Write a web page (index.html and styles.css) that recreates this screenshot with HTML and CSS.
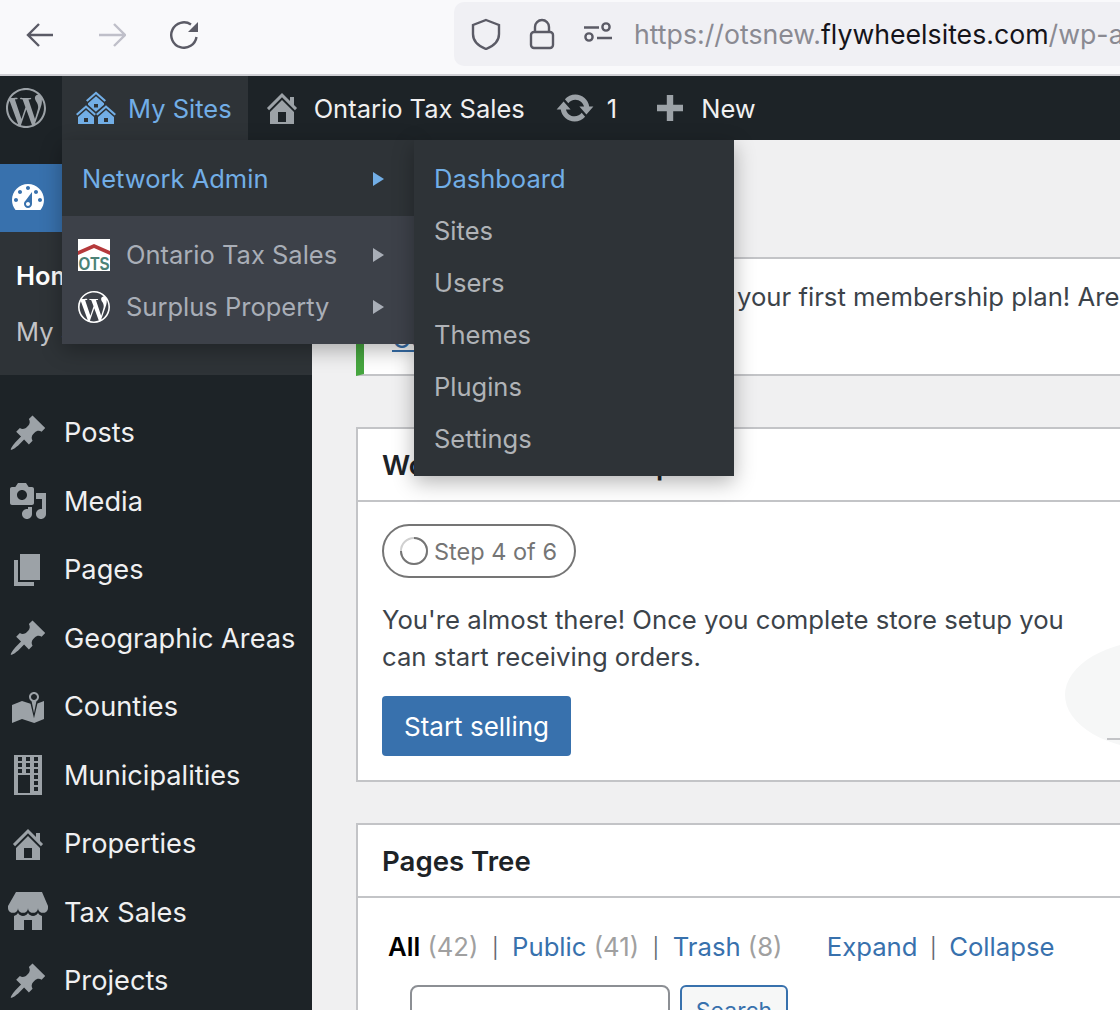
FILE: index.html
```html
<!DOCTYPE html>
<html lang="en">
<head>
<meta charset="utf-8">
<title>Dashboard</title>
<link rel="stylesheet" href="styles.css">
</head>
<body>
<svg class="defs" aria-hidden="true">
  <symbol id="i-wp" viewBox="0 0 24 24"><path d="M21.469 6.825c.84 1.537 1.318 3.3 1.318 5.175 0 3.979-2.156 7.456-5.363 9.325l3.295-9.527c.615-1.54.82-2.771.82-3.864 0-.405-.026-.78-.07-1.11m-7.981.105c.647-.03 1.232-.105 1.232-.105.582-.075.514-.93-.067-.899 0 0-1.755.135-2.88.135-1.064 0-2.85-.15-2.85-.15-.585-.03-.661.855-.075.885 0 0 .54.061 1.125.09l1.68 4.605-2.37 7.08L5.354 6.9c.649-.03 1.234-.1 1.234-.1.585-.075.516-.93-.065-.896 0 0-1.746.138-2.874.138-.2 0-.438-.008-.69-.015C4.911 3.15 8.235 1.215 12 1.215c2.809 0 5.365 1.072 7.286 2.833-.046-.003-.091-.009-.141-.009-1.06 0-1.812.923-1.812 1.914 0 .89.513 1.643 1.06 2.531.411.72.89 1.643.89 2.977 0 .915-.354 1.994-.821 3.479l-1.075 3.585-3.9-11.61.001.014zM12 22.784c-1.059 0-2.081-.153-3.048-.437l3.237-9.406 3.315 9.087c.024.053.05.101.078.149-1.12.393-2.325.609-3.582.609M1.211 12c0-1.564.336-3.05.935-4.39L7.29 21.709C3.694 19.96 1.212 16.271 1.211 12M12 0C5.385 0 0 5.385 0 12s5.385 12 12 12 12-5.385 12-12S18.615 0 12 0"/></symbol>
  <symbol id="i-pin" viewBox="0 0 20 20"><path d="M10.44 3.02l1.82-1.82 6.36 6.35-1.83 1.82c-1.05-.68-2.48-.57-3.41.36l-.75.75c-.92.93-1.04 2.35-.35 3.41l-1.83 1.82-2.41-2.41-2.8 2.79c-.42.42-3.38 2.71-3.8 2.29s1.86-3.39 2.28-3.81l2.79-2.79L4.1 9.36l1.83-1.82c1.05.69 2.48.57 3.41-.36l.75-.75c.93-.92 1.04-2.35.35-3.41z"/></symbol>
  <symbol id="i-home" viewBox="0 0 20 20"><path d="M16 8.5l1.53 1.53-1.06 1.06L10 4.62l-6.47 6.47-1.06-1.06L10 2.5l4 4v-2h2v4zm-6-2.46l6 5.99V18H4v-5.97zM12 17v-5H8v5h4z"/></symbol>
</svg>

<div class="browser">
  <div class="nav-btns">
    <svg class="nav-ic" viewBox="0 0 28 28"><path d="M27 14H2M13 3L2 14l11 11"/></svg>
    <svg class="nav-ic off" viewBox="0 0 28 28"><path d="M1 14h26M16 3l11 11-11 11"/></svg>
    <svg class="nav-ic" viewBox="0 0 28 28"><path d="M26.5 16A12.7 12.7 0 1 1 21 3.5"/><path class="solid" d="M28 1v10H18z"/></svg>
  </div>
  <div class="urlbar">
    <svg class="url-ic" viewBox="0 0 32 32"><path d="M16 2l13 5v9c0 7-5 12-13 15C8 28 3 23 3 16V7z"/></svg>
    <svg class="url-ic" viewBox="0 0 32 32"><rect x="5" y="14" width="22" height="16" rx="3"/><path d="M9 14V9a7 7 0 0 1 14 0v5"/></svg>
    <svg class="url-ic" viewBox="0 0 32 32"><path d="M2 9.500h15M15 20h15"/><circle cx="24" cy="9" r="3.600"/><circle cx="7" cy="19" r="3.600"/></svg>
    <span class="url">https://otsnew.<b class="host">flywheelsites.com</b>/wp-admin/network/</span>
  </div>
</div>

<header class="adminbar">
  <div class="ab-logo"><svg class="ic40"><use href="#i-wp"/></svg></div>
  <div class="ab-item hover">
    <svg class="ic40" viewBox="0 0 20 20"><path d="M14.27 6.87L10 3.14 5.73 6.87 5 6.14l5-4.38 5 4.38zM14 8.42l-4.05 3.43L6 8.38v-.74l4-3.5 4 3.5v.78zM11 9.7V8H9v1.7h2zm-1.73 4.03L5 10 .73 13.73 0 13l5-4.38L10 13zm10 0L15 10l-4.27 3.73L10 13l5-4.38L20 13zM5 11l4 3.5V18H1v-3.5zm10 0l4 3.5V18h-8v-3.5zm-9 6v-2H4v2h2zm10 0v-2h-2v2h2z"/></svg>
    <span>My Sites</span>
  </div>
  <div class="ab-item"><svg class="ic40"><use href="#i-home"/></svg><span>Ontario Tax Sales</span></div>
  <div class="ab-item"><svg class="ic40" viewBox="0 0 20 20"><path d="M10.2 3.28c3.53 0 6.43 2.61 6.92 6h2.08l-3.5 4-3.5-4h2.32c-.45-1.97-2.21-3.45-4.32-3.45-1.45 0-2.73.71-3.54 1.78L4.95 5.66C6.23 4.2 8.11 3.28 10.2 3.28zm-.4 13.44c-3.52 0-6.43-2.61-6.92-6H.8l3.5-4c1.17 1.33 2.33 2.67 3.5 4H5.48c.45 1.97 2.21 3.45 4.32 3.45 1.45 0 2.73-.71 3.54-1.78l1.71 1.95c-1.28 1.46-3.15 2.38-5.25 2.38z"/></svg><span>1</span></div>
  <div class="ab-item ab-new"><svg class="ic40" viewBox="0 0 20 20"><path d="M16.500 8.400v3.200h-4.900v4.900H8.400v-4.900H3.500V8.400h4.900V3.500h3.200v4.900z"/></svg><span>New</span></div>

  <div class="dropdown">
    <div class="dd-top">
      <div class="dd-row active"><span>Network Admin</span><i class="arrow"></i></div>
    </div>
    <div class="dd-bottom">
      <div class="dd-site">
        <svg class="blavatar" viewBox="0 0 32 32"><rect width="32" height="32" fill="#fff"/><path d="M0 12L16 5l16 7v4L16 9 0 16z" fill="#b5393b"/><text class="ots" x="16" y="31" text-anchor="middle" textLength="31" lengthAdjust="spacingAndGlyphs">OTS</text></svg>
        <span>Ontario Tax Sales</span><i class="arrow"></i>
      </div>
      <div class="dd-site">
        <svg class="blavatar wp"><use href="#i-wp"/></svg>
        <span>Surplus Property</span><i class="arrow"></i>
      </div>
    </div>
    <ul class="flyout">
      <li class="active">Dashboard</li>
      <li>Sites</li>
      <li>Users</li>
      <li>Themes</li>
      <li>Plugins</li>
      <li>Settings</li>
    </ul>
  </div>
</header>

<div class="layout">
  <nav class="sidebar">
    <div class="side-current">
      <svg class="ic40" viewBox="0 0 20 20"><path d="M3.76 16h12.48c1.1-1.37 1.76-3.11 1.76-5 0-4.42-3.58-8-8-8s-8 3.58-8 8c0 1.89.66 3.63 1.76 5zM10 4c.55 0 1 .45 1 1s-.45 1-1 1-1-.45-1-1 .45-1 1-1zM6 6c.55 0 1 .45 1 1s-.45 1-1 1-1-.45-1-1 .45-1 1-1zm8 0c.55 0 1 .45 1 1s-.45 1-1 1-1-.45-1-1 .45-1 1-1zm-5.37 5.55L12 7v6c0 1.1-.9 2-2 2s-2-.9-2-2c0-.57.24-1.08.63-1.45zM4 10c.55 0 1 .45 1 1s-.45 1-1 1-1-.45-1-1 .45-1 1-1zm12 0c.55 0 1 .45 1 1s-.45 1-1 1-1-.45-1-1 .45-1 1-1zm-5 3c0-.55-.45-1-1-1s-1 .45-1 1 .45 1 1 1 1-.45 1-1z"/></svg>
      <span>Dashboard</span>
    </div>
    <div class="side-sub">
      <div class="sub-home">Home</div>
      <div class="sub-link">My Sites</div>
    </div>
    <ul class="side-menu">
      <li><svg class="ic40"><use href="#i-pin"/></svg>Posts</li>
      <li><svg class="ic40" viewBox="0 0 20 20"><path d="M13 11V4c0-.55-.45-1-1-1h-1.67L9 1H5L3.67 3H2c-.55 0-1 .45-1 1v7c0 .55.45 1 1 1h10c.55 0 1-.45 1-1zM7 4.5c1.38 0 2.5 1.12 2.5 2.5S8.38 9.5 7 9.5 4.5 8.38 4.5 7 5.62 4.5 7 4.5zM14 6h5v10.5c0 1.38-1.12 2.5-2.5 2.5S14 17.88 14 16.5s1.12-2.5 2.5-2.5c.17 0 .34.02.5.05V9h-3V6zm-4 8.05V13h2v3.5c0 1.38-1.12 2.5-2.5 2.5S7 17.88 7 16.5 8.12 14 9.5 14c.17 0 .34.02.5.05z"/></svg>Media</li>
      <li><svg class="ic40" viewBox="0 0 20 20"><path d="M6 15V2h10v13H6zm-1 1h8v2H3V5h2v11z"/></svg>Pages</li>
      <li><svg class="ic40"><use href="#i-pin"/></svg>Geographic Areas</li>
      <li><svg class="ic40" viewBox="0 0 20 20"><path d="M13 13.14l1.17-5.94c.79-.43 1.33-1.25 1.33-2.2 0-1.38-1.12-2.5-2.5-2.5S10.5 3.62 10.5 5c0 .95.54 1.77 1.33 2.2zm0-9.64c.83 0 1.5.67 1.5 1.5s-.67 1.5-1.5 1.5-1.5-.67-1.5-1.5.67-1.5 1.5-1.5zm1.72 4.8L18 6.97v9L13.12 18 7 15.97l-5 2v-9l5-2 4.27 1.41 1.73 7.3z"/></svg>Counties</li>
      <li><svg class="ic40" viewBox="0 0 20 20"><path fill-rule="evenodd" d="M3 0h14v20H3zM5 1v2h2V1zM9 1v2h2V1zM13 1v2h2V1zM5 4v2h2V4zM9 4v2h2V4zM13 4v2h2V4zM5 7v2h2V7zM9 7v2h2V7zM13 7v2h2V7zM5 10v9h6v-9zM13 13v2h2v-2zM13 16v2h2v-2zM13 10v2h2v-2z"/></svg>Municipalities</li>
      <li><svg class="ic40"><use href="#i-home"/></svg>Properties</li>
      <li><svg class="ic40" viewBox="0 0 20 20"><path d="M1 10c.41.29.96.43 1.5.43.55 0 1.09-.14 1.5-.43.62-.46 1-1.17 1-2 0 .83.37 1.54 1 2 .41.29.96.43 1.5.43.55 0 1.09-.14 1.5-.43.62-.46 1-1.17 1-2 0 .83.37 1.54 1 2 .41.29.96.43 1.51.43.54 0 1.08-.14 1.49-.43.62-.46 1-1.17 1-2 0 .83.37 1.54 1 2 .41.29.96.43 1.5.43.55 0 1.09-.14 1.5-.43.63-.46 1-1.17 1-2V7l-3-7H4L0 7v1c0 .83.37 1.54 1 2zm2 8.99h5v-5h4v5h5v-7c-.37-.05-.72-.22-1-.43-.63-.45-1-.73-1-1.56 0 .83-.38 1.11-1 1.56-.41.3-.95.43-1.49.44-.55 0-1.1-.14-1.51-.44-.63-.45-1-.73-1-1.56 0 .83-.38 1.11-1 1.56-.41.3-.95.43-1.5.44-.54 0-1.09-.14-1.5-.44-.63-.45-1-.73-1-1.57 0 .84-.38 1.12-1 1.57-.29.21-.63.38-1 .44v6.99z"/></svg>Tax Sales</li>
      <li><svg class="ic40"><use href="#i-pin"/></svg>Projects</li>
    </ul>
  </nav>

  <main class="content">
    <div class="notice">
      <p class="notice-text"><span class="notice-lead">Get started by creating</span><span>your first membership plan! Are you ready to begin?</span></p>
      <a class="notice-link" href="#">Get started</a>
    </div>

    <section class="card setup">
      <h2 class="card-head">WooCommerce Setup</h2>
      <div class="card-body setup-body">
        <div class="pill">
          <svg class="spinner" viewBox="0 0 28 28"><circle cx="14" cy="14" r="13" class="sp-track"/><path d="M14 1a13 13 0 0 1 0 26 13 13 0 0 1-13-13" class="sp-fill"/></svg>
          <span>Step 4 of 6</span>
        </div>
        <p class="setup-text">You're almost there! Once you complete store setup you can start receiving orders.</p>
        <a class="primary" href="#">Start selling</a>
        <div class="blob"></div>
        <div class="blob-line"></div>
      </div>
    </section>

    <section class="card tree">
      <h2 class="card-head">Pages Tree</h2>
      <div class="card-body tree-body">
        <div class="filters">
          <b class="f-all">All</b> <span class="count">(42)</span><span class="sep">|</span><a href="#">Public</a> <span class="count">(41)</span><span class="sep">|</span><a href="#">Trash</a> <span class="count">(8)</span>
          <a class="expand" href="#">Expand</a><span class="sep">|</span><a href="#">Collapse</a>
        </div>
        <div class="search">
          <input class="search-input" type="text" aria-label="Search">
          <button class="search-btn" type="button">Search</button>
        </div>
      </div>
    </section>
  </main>
</div>
</body>
</html>
```
FILE: styles.css
```css
* { box-sizing: border-box; }
html, body { margin: 0; height: 1010px; overflow: hidden; }
body {
  font-family: Inter, "Noto Sans", "Liberation Sans", sans-serif;
  font-size: 25.5px;
  background: #f0f0f1;
  color: #3c434a;
  display: flex;
  flex-direction: column;
}
.defs { position: absolute; width: 0; height: 0; }
ul { list-style: none; margin: 0; padding: 0; }
p { margin: 0; }
a { color: #3871ad; text-decoration: none; }
.ic40 { width: 40px; height: 40px; flex: none; fill: #9ca2a7; }

/* browser chrome */
.browser {
  height: 76px;
  flex: none;
  background: #f9f9fb;
  border-bottom: 2px solid #cfcfd4;
  display: flex;
  padding-top: 2px;
}
.nav-btns { width: 454px; display: flex; align-items: flex-start; gap: 44px; padding: 19px 0 0 26px; }
.nav-ic { width: 28px; height: 28px; fill: none; stroke: #5b5b66; stroke-width: 2.4; }
.nav-ic.off { stroke: #bfbfc9; }
.nav-ic .solid { fill: #5b5b66; stroke: none; }
.urlbar {
  flex: 1;
  height: 64px;
  background: #f0f0f4;
  border-radius: 10px 0 0 10px;
  display: flex;
  align-items: center;
  padding-left: 16px;
  gap: 24px;
  overflow: hidden;
  white-space: nowrap;
}
.url-ic { width: 32px; height: 32px; flex: none; fill: none; stroke: #5b5b66; stroke-width: 2.4; }
.url { margin-left: -4px; color: #8a8a92; font-size: 26.7px; }
.host { font-weight: 400; color: #15141a; }

/* admin bar */
.adminbar {
  position: relative;
  z-index: 5;
  flex: none;
  height: 64px;
  background: #1d2327;
  color: #f0f0f1;
  display: flex;
  align-items: stretch;
  white-space: nowrap;
}
.ab-logo { width: 62px; padding-left: 6px; display: flex; align-items: center; }
.ab-item { display: flex; align-items: center; gap: 12px; padding: 0 16px 0 14px; }
.ab-new { padding-left: 17px; gap: 11px; }
.ab-item.hover { background: #2e3337; color: #72aee6; }
.ab-item.hover .ic40 { fill: #72aee6; }

.dropdown {
  position: absolute;
  left: 62px;
  top: 64px;
  width: 352px;
  box-shadow: 0 6px 20px rgba(0, 0, 0, .3);
  color: #c3c4c7;
}
.dd-top { height: 76px; background: #2e3337; padding-top: 13px; }
.dd-row { height: 52px; display: flex; align-items: center; padding: 0 30px 0 20px; justify-content: space-between; }
.dd-row span { padding-bottom: 2px; }
.dd-row.active { color: #72aee6; }
.dd-row.active .arrow { border-left-color: #72aee6; }
.dd-bottom { height: 128px; background: #3d4149; padding-top: 13px; color: #a9aeb7; }
.dd-site { height: 52px; display: flex; align-items: center; padding: 0 30px 0 16px; gap: 16px; }
.dd-site span { flex: 1; padding-bottom: 2px; }
.arrow { width: 0; height: 0; flex: none; border-left: 11px solid #a9aeb7; border-top: 7px solid transparent; border-bottom: 7px solid transparent; }
.blavatar { width: 32px; height: 32px; flex: none; }
.blavatar.wp { fill: #fff; }
.ots { font: 700 19px "Liberation Sans", sans-serif; fill: #4b8276; }
.flyout {
  position: absolute;
  left: 352px;
  top: 0;
  width: 320px;
  height: 336px;
  padding: 13px 0 11px 20px;
  background: #2e3337;
  box-shadow: 0 6px 20px rgba(0, 0, 0, .3);
}
.flyout li { height: 52px; line-height: 52px; color: #b0b3b7; }
.flyout li.active { color: #72aee6; }

/* layout */
.layout { flex: 1; min-height: 0; display: flex; }
.sidebar { width: 312px; flex: none; background: #1d2327; color: #f0f0f1; padding-top: 24px; overflow: hidden; font-size: 27.2px; }
.side-current { height: 68px; background: #3871ad; color: #fff; display: flex; align-items: center; gap: 17px; padding-left: 8px; }
.side-current .ic40 { fill: #fff; }
.side-sub { height: 143px; background: #2e3337; padding-top: 18px; color: #c3c4c7; font-size: 25.5px; }
.sub-home { height: 52px; line-height: 52px; padding-left: 16px; color: #fff; font-weight: 600; }
.sub-link { height: 60px; line-height: 60px; padding-left: 16px; }
.side-menu { padding-top: 23.25px; }
.side-menu li { height: 68.5px; display: flex; align-items: center; gap: 16px; padding-left: 8px; }

.content { flex: 1; min-width: 0; padding: 117px 0 0 44px; overflow: hidden; font-size: 25.7px; }

.notice {
  width: 900px;
  height: 119px;
  background: #fff;
  border: 2px solid #c3c4c7;
  border-left: 8px solid #46a63f;
  padding: 20px 0 0 28px;
  color: #3c434a;
  white-space: nowrap;
}
.notice-text { line-height: 36px; }
.notice-lead { display: inline-block; width: 345px; overflow: hidden; vertical-align: bottom; }
.notice-link { display: inline-block; margin-top: 6px; line-height: 36px; text-decoration: underline; }

.card { width: 900px; background: #fff; border: 2px solid #c3c4c7; }
.setup { height: 355px; margin-top: 51px; }
.tree { height: 300px; margin-top: 41px; }
.card-head { margin: 0; height: 73px; border-bottom: 2px solid #c3c4c7; padding-left: 24px; font-size: 27.6px; font-weight: 600; line-height: 73px; color: #1d2327; }
.card-body { position: relative; padding: 22px 24px; }
.pill {
  display: inline-flex;
  align-items: center;
  gap: 6px;
  height: 54px;
  padding: 0 17px 0 16px;
  border: 2px solid #757575;
  border-radius: 27px;
  color: #757575;
  font-size: 23.5px;
}
.spinner { width: 28px; height: 28px; fill: none; stroke-width: 2; }
.sp-track { stroke: #d0d0d0; }
.sp-fill { stroke: #757575; }
.setup-text { width: 700px; margin-top: 23px; line-height: 37px; }
.primary {
  display: inline-block;
  margin-top: 21px;
  height: 60px;
  line-height: 62px;
  padding: 0 22px;
  border-radius: 4px;
  background: #3871ad;
  color: #fff;
  font-size: 26px;
}
.blob { position: absolute; left: 707px; top: 138px; width: 190px; height: 110px; border-radius: 50%; background: #f6f7f7; }
.blob-line { position: absolute; left: 749px; top: 236px; width: 150px; height: 2px; background: #c3c4c7; }

.tree-body { padding: 31px 0 0 30px; }
.filters { line-height: 36px; white-space: nowrap; }
.f-all { color: #000; font-weight: 600; }
.count { color: #a0a0a0; }
.sep { margin: 0 13.5px; color: #646970; font-size: 20px; vertical-align: 1px; }
.expand { margin-left: 37px; }
.expand + .sep { margin: 0 12.5px; }
.search { display: flex; gap: 10px; margin: 19px 0 0 22px; }
.search-input { width: 260px; height: 60px; border: 2px solid #8c8f94; border-radius: 8px; background: #fff; }
.search-btn { width: 108px; height: 60px; padding: 0 0 8px; border: 2px solid #3871ad; border-radius: 6px; background: #f6f7f7; color: #3871ad; font: inherit; font-size: 23px; }
```
